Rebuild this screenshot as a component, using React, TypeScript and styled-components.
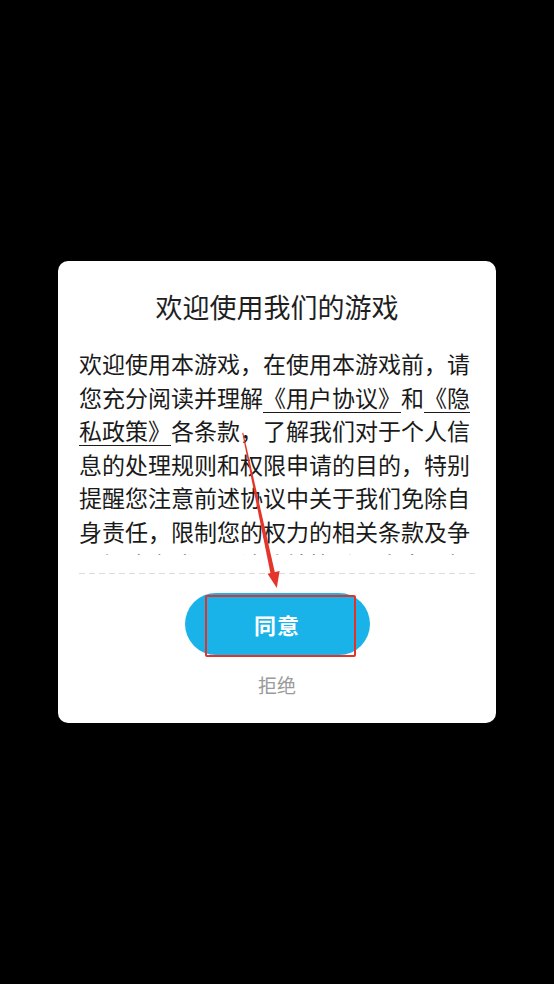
import styled, { createGlobalStyle } from 'styled-components';

const GlobalStyle = createGlobalStyle`
    html, body {
        margin: 0;
        padding: 0;
        background: #000;
    }

    body {
        font-family: "Noto Sans CJK SC", "Noto Sans", sans-serif;
    }
`;

const Screen = styled.div`
    position: relative;
    width: 100vw;
    height: 100vh;
    display: flex;
    align-items: center;
    justify-content: center;
    background: #000;
    overflow: hidden;
`;

const Dialog = styled.div`
    width: 438px;
    box-sizing: border-box;
    padding: 27px 21px 25px;
    background: #fff;
    border-radius: 10px;
    display: flex;
    flex-direction: column;
    align-items: center;
`;

const Title = styled.h2`
    margin: 0 0 21px;
    font-size: 27px;
    line-height: 38px;
    font-weight: 400;
    color: #1f1f1f;
`;

const Content = styled.div`
    width: 100%;
    height: 208px;
    overflow: hidden;
    font-size: 23px;
    line-height: 33.5px;
    color: #1a1a1a;
`;

const Link = styled.a`
    color: inherit;
    text-decoration: underline;
    text-decoration-thickness: 1px;
    text-underline-offset: 5px;
`;

const Divider = styled.div`
    width: 100%;
    height: 1px;
    margin-top: 18px;
    background-image: repeating-linear-gradient(to right, #dcdcdc 0 6px, transparent 6px 10px);
`;

const AgreeButton = styled.button`
    position: relative;
    margin-top: 19px;
    width: 185px;
    height: 62px;
    border: none;
    border-radius: 31px;
    background: #1ab3e9;
    color: #fff;
    font-family: inherit;
    font-size: 22px;
    font-weight: 700;
    letter-spacing: 1px;
    cursor: pointer;
`;

const Highlight = styled.span`
    position: absolute;
    left: 20px;
    top: 2px;
    width: 151px;
    height: 62px;
    box-sizing: border-box;
    border: 2px solid #e2332b;
    border-radius: 2px;
    pointer-events: none;
`;

const RejectButton = styled.button`
    margin-top: 17px;
    padding: 0;
    border: none;
    background: none;
    font-family: inherit;
    font-size: 19px;
    line-height: 26px;
    color: #9a9a9a;
    cursor: pointer;
`;

const Annotation = styled.svg`
    position: absolute;
    left: 0;
    top: 0;
    width: 554px;
    height: 984px;
    pointer-events: none;
`;

export default function App() {
    return (
        <>
            <GlobalStyle />
            <Screen>
                <Dialog>
                    <Title>欢迎使用我们的游戏</Title>

                    <Content>
                        欢迎使用本游戏，在使用本游戏前，请您充分阅读并理解
                        <Link>《用户协议》</Link>
                        和
                        <Link>《隐私政策》</Link>
                        各条款，了解我们对于个人信息的处理规则和权限申请的目的，特别提醒您注意前述协议中关于我们免除自身责任，限制您的权力的相关条款及争议解决方式，司法管辖等重要内容。如您同意上述协议，请点击“同意”开始使用我们的服务。
                    </Content>

                    <Divider />

                    <AgreeButton>
                        同意
                        <Highlight />
                    </AgreeButton>

                    <RejectButton>拒绝</RejectButton>
                </Dialog>

                <Annotation viewBox="0 0 554 984">
                    <polygon
                        points="242.2,433 243.3,432.8 275.0,573 270.6,574 "
                        fill="#e5352a"
                    />
                    <polygon
                        points="279.6,571 267.6,573.7 276.8,588"
                        fill="#e5352a"
                    />
                </Annotation>
            </Screen>
        </>
    );
}
